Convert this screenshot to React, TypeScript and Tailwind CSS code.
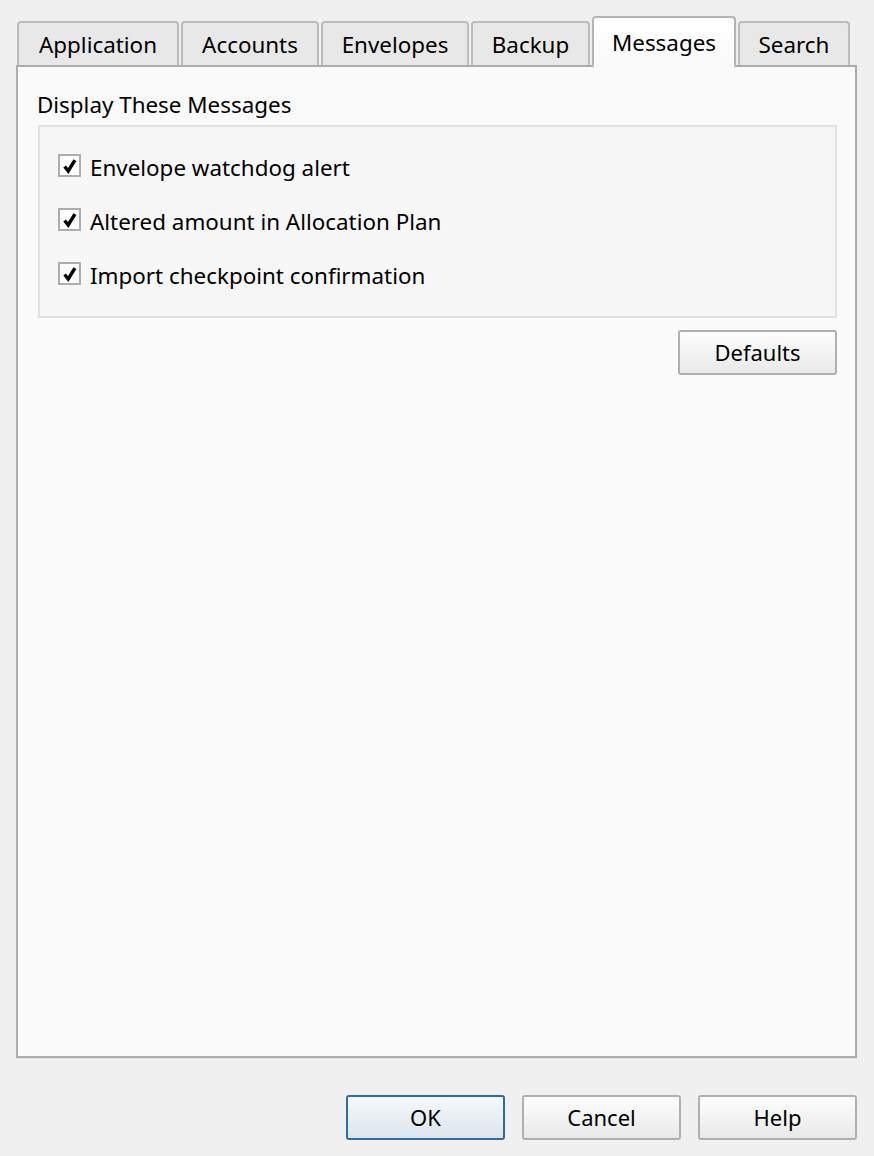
import React from "react";

// Options dialog — "Messages" tab selected.

const tabs = [
  { label: "Application", w: "w-[162px]" },
  { label: "Accounts", w: "w-[138px]" },
  { label: "Envelopes", w: "w-[148px]" },
  { label: "Backup", w: "w-[119px]" },
  { label: "Messages", w: "w-[144px]", active: true },
  { label: "Search", w: "w-[112px]" },
];

const messages = [
  "Envelope watchdog alert",
  "Altered amount in Allocation Plan",
  "Import checkpoint confirmation",
];

function CheckBox() {
  return (
    <span className="flex h-[23px] w-[23px] shrink-0 items-center justify-center border-2 border-[#adadad] bg-white">
      <svg viewBox="0 0 20 20" className="h-[18px] w-[18px]">
        <path
          d="M4 10.5 L8 15.5 L15.5 3.5"
          fill="none"
          stroke="#000"
          strokeWidth="3.8"
          strokeLinecap="butt"
          strokeLinejoin="miter"
        />
      </svg>
    </span>
  );
}

function DialogButton({
  children,
  primary,
}: {
  children: React.ReactNode;
  primary?: boolean;
}) {
  return (
    <button
      type="button"
      className={
        primary
          ? "flex h-[45px] w-[159px] items-center justify-center rounded-[3px] border-2 border-[#2f6d9e] bg-gradient-to-b from-[#f4f8fb] to-[#dce5ee] text-[22px] text-black"
          : "flex h-[45px] w-[159px] items-center justify-center rounded-[3px] border-2 border-[#b0b0b0] bg-gradient-to-b from-[#fdfdfd] to-[#e9e9e9] text-[22px] text-black"
      }
    >
      {children}
    </button>
  );
}

export default function App() {
  return (
    <div
      className="flex h-[1156px] w-[874px] flex-col bg-[#f0f0f0] pl-[16px] pt-[16px] text-black"
      style={{ fontFamily: '"Noto Sans", "Open Sans", sans-serif' }}
    >
      {/* Tab strip */}
      <div className="flex h-[49px] items-end gap-[2px] pl-[1px]">
        {tabs.map((t) =>
          t.active ? (
            <div
              key={t.label}
              className={`relative z-10 -mb-[2px] flex h-[51px] ${t.w} items-center justify-center rounded-t-[4px] border-2 border-b-0 border-[#b4b4b4] bg-gradient-to-b from-white to-[#fafafa] pt-[1px] text-[22.4px]`}
            >
              {t.label}
            </div>
          ) : (
            <div
              key={t.label}
              className={`flex h-[44px] ${t.w} items-center justify-center rounded-t-[4px] border-2 border-b-0 border-[#bcbcbc] bg-[#e8e8e8] pt-[2px] text-[22.4px]`}
            >
              {t.label}
            </div>
          )
        )}
      </div>

      {/* Tab page */}
      <div className="flex h-[993px] w-[841px] flex-col border-2 border-[#adadad] bg-[#fafafa] pl-[19px] pr-[18px]">
        <div className="mt-[23px] text-[22.4px] leading-[30px]">Display These Messages</div>

        <div className="ml-[1px] mt-[5px] flex h-[193px] flex-col gap-[31px] border-2 border-[#e2e2e2] bg-[#f7f7f7] pl-[18px] pt-[27px] shadow-[inset_0_0_1px_rgba(0,0,0,0.05)]">
          {messages.map((m) => (
            <label key={m} className="flex h-[23px] items-center gap-[9px] text-[22.4px]">
              <CheckBox />
              <span className="pt-[4px]">{m}</span>
            </label>
          ))}
        </div>

        <div className="mt-[12px] flex justify-end">
          <DialogButton>Defaults</DialogButton>
        </div>
      </div>
      <div className="h-px w-[841px] bg-[#e4e4e4]" />

      {/* Dialog buttons */}
      <div className="mt-[36px] flex w-[841px] justify-end gap-[17px]">
        <DialogButton primary>OK</DialogButton>
        <DialogButton>Cancel</DialogButton>
        <DialogButton>Help</DialogButton>
      </div>
    </div>
  );
}
